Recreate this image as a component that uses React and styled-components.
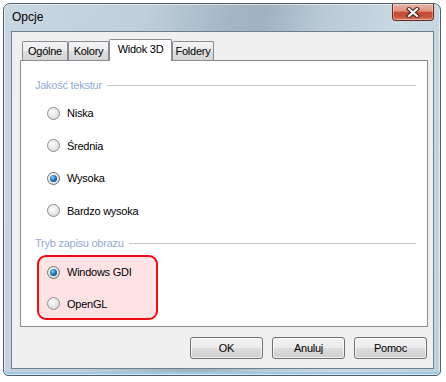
import styled, { createGlobalStyle } from "styled-components";

const GlobalStyle = createGlobalStyle`
  html, body {
    margin: 0;
    padding: 0;
    background: #ffffff;
  }
  body {
    font-family: "Liberation Sans", Arial, sans-serif;
    font-size: 11px;
    letter-spacing: -0.25px;
    color: #000000;
  }
`;

const Window = styled.div`
  box-sizing: border-box;
  width: 438px;
  height: 373px;
  margin: 3px;
  display: flex;
  flex-direction: column;
  padding: 0 6px 6px 7px;
  border: 1px solid #4f5f6c;
  border-radius: 7px 7px 5px 5px;
  background: linear-gradient(
    100deg,
    #c9d7e2 0%,
    #c0cfdb 28%,
    #a3b6c4 46%,
    #9fb2c1 52%,
    #b9cad6 64%,
    #cbd9e3 80%,
    #bfd0dd 100%
  );
  box-shadow: inset 0 0 0 1px rgba(255, 255, 255, 0.55),
    inset 0 -3px 0 #9cc9e4;
`;

const TitleBar = styled.div`
  height: 27px;
  margin: 0 -6px 0 -7px;
  padding: 0 6px 0 8px;
  display: flex;
  justify-content: space-between;
  align-items: flex-start;
`;

const Title = styled.span`
  line-height: 27px;
  font-size: 12px;
  letter-spacing: 0;
  color: #000000;
`;

const CloseButton = styled.div`
  box-sizing: border-box;
  width: 42px;
  height: 17px;
  display: flex;
  align-items: center;
  justify-content: center;
  border: 1px solid #6a2d22;
  border-top: none;
  border-radius: 0 0 4px 4px;
  background: linear-gradient(
    #e9b6a7 0%,
    #dd917c 45%,
    #c44a30 52%,
    #c6533a 80%,
    #d7826c 100%
  );
  box-shadow: inset 0 0 0 1px rgba(255, 255, 255, 0.35);
`;

const Client = styled.div`
  flex: 1;
  display: flex;
  flex-direction: column;
  border: 1px solid #6e7e8b;
  background: #f0f0f0;
  padding: 7px 5px 9px 8px;
`;

const TabStrip = styled.div`
  display: flex;
  align-items: flex-end;
  height: 21px;
  padding-left: 2px;
  position: relative;
  z-index: 1;
`;

const Tab = styled.div`
  box-sizing: border-box;
  width: ${(p) => p.w}px;
  height: ${(p) => (p.active ? 22 : 19)}px;
  margin-bottom: ${(p) => (p.active ? -1 : 0)}px;
  display: flex;
  align-items: center;
  justify-content: center;
  border: 1px solid #898c95;
  border-bottom: none;
  border-radius: 2px 2px 0 0;
  background: ${(p) =>
    p.active
      ? "#ffffff"
      : "linear-gradient(#f4f4f4 0%, #ebebeb 50%, #dedede 51%, #d6d6d6 100%)"};
  padding-bottom: ${(p) => (p.active ? 3 : 0)}px;
  white-space: nowrap;
`;

const Panel = styled.div`
  flex: 1;
  display: flex;
  flex-direction: column;
  border: 1px solid #898c95;
  background: #ffffff;
  padding: 17px 11px 0 14px;
`;

const GroupHeader = styled.div`
  display: flex;
  align-items: center;
  gap: 5px;
  line-height: 14px;
  color: #93abd6;
  margin-top: ${(p) => p.top || 0}px;

  &::after {
    content: "";
    flex: 1;
    height: 1px;
    background: #c3c6cb;
  }
`;

const RadioList = styled.div`
  display: flex;
  flex-direction: column;
  gap: 12.5px;
  margin-top: 11px;
  padding-left: 12px;
`;

const HighlightBox = styled.div`
  box-sizing: border-box;
  width: 121px;
  display: flex;
  flex-direction: column;
  gap: 11.5px;
  margin: 5px 0 0 2px;
  padding: 5px 0 4px 8px;
  border: 2px solid #ee0a12;
  border-radius: 9px;
  background: #ffe3e4;
`;

const Row = styled.label`
  height: 20px;
  display: flex;
  align-items: center;
  gap: 7px;
  white-space: nowrap;
`;

const Dot = styled.span`
  box-sizing: border-box;
  width: 13px;
  height: 13px;
  flex: none;
  border-radius: 50%;
  border: 1px solid ${(p) => (p.checked ? "#6f7275" : "#8d8f90")};
  display: flex;
  align-items: center;
  justify-content: center;
  background: radial-gradient(
    circle at 40% 35%,
    rgba(255, 255, 255, 0.95) 0%,
    rgba(226, 226, 226, 0.9) 60%,
    rgba(190, 190, 190, 0.9) 100%
  );

  &::after {
    content: "";
    display: ${(p) => (p.checked ? "block" : "none")};
    width: 7px;
    height: 7px;
    border-radius: 50%;
    background: radial-gradient(
      circle at 40% 35%,
      #8fd3fa 0%,
      #1f78b8 45%,
      #0a3b6c 100%
    );
  }
`;

const ButtonRow = styled.div`
  display: flex;
  justify-content: flex-end;
  gap: 9px;
  margin-top: 10px;
  padding-right: 1px;
`;

const Button = styled.button`
  box-sizing: border-box;
  width: 73px;
  height: 22px;
  padding: 0;
  font-family: "Liberation Sans", Arial, sans-serif;
  font-size: 11px;
  letter-spacing: -0.25px;
  color: #000000;
  border: 1px solid #707070;
  border-radius: 3px;
  background: linear-gradient(
    #f2f2f2 0%,
    #ebebeb 50%,
    #dddddd 51%,
    #cfcfcf 100%
  );
  box-shadow: inset 0 0 0 1px rgba(255, 255, 255, 0.7);
`;

function Radio({ checked, children }) {
  return (
    <Row>
      <Dot checked={checked} />
      {children}
    </Row>
  );
}

function CloseIcon() {
  return (
    <svg width="14" height="11" viewBox="0 0 14 11">
      <path
        d="M3 2 L11 9 M11 2 L3 9"
        stroke="#47201a"
        strokeWidth="4.2"
        strokeLinecap="square"
        fill="none"
      />
      <path
        d="M3 2 L11 9 M11 2 L3 9"
        stroke="#ffffff"
        strokeWidth="2.2"
        strokeLinecap="square"
        fill="none"
      />
    </svg>
  );
}

const tabs = [
  { label: "Ogólne", w: 46 },
  { label: "Kolory", w: 41 },
  { label: "Widok 3D", w: 63, active: true },
  { label: "Foldery", w: 42 },
];

export default function App() {
  return (
    <>
      <GlobalStyle />
      <Window>
        <TitleBar>
          <Title>Opcje</Title>
          <CloseButton>
            <CloseIcon />
          </CloseButton>
        </TitleBar>
        <Client>
          <TabStrip>
            {tabs.map((t) => (
              <Tab key={t.label} w={t.w} active={t.active}>
                {t.label}
              </Tab>
            ))}
          </TabStrip>
          <Panel>
            <GroupHeader>Jakość tekstur</GroupHeader>
            <RadioList>
              <Radio>Niska</Radio>
              <Radio>Średnia</Radio>
              <Radio checked>Wysoka</Radio>
              <Radio>Bardzo wysoka</Radio>
            </RadioList>
            <GroupHeader top={15.5}>Tryb zapisu obrazu</GroupHeader>
            <HighlightBox>
              <Radio checked>Windows GDI</Radio>
              <Radio>OpenGL</Radio>
            </HighlightBox>
          </Panel>
          <ButtonRow>
            <Button>OK</Button>
            <Button>Anuluj</Button>
            <Button>Pomoc</Button>
          </ButtonRow>
        </Client>
      </Window>
    </>
  );
}
